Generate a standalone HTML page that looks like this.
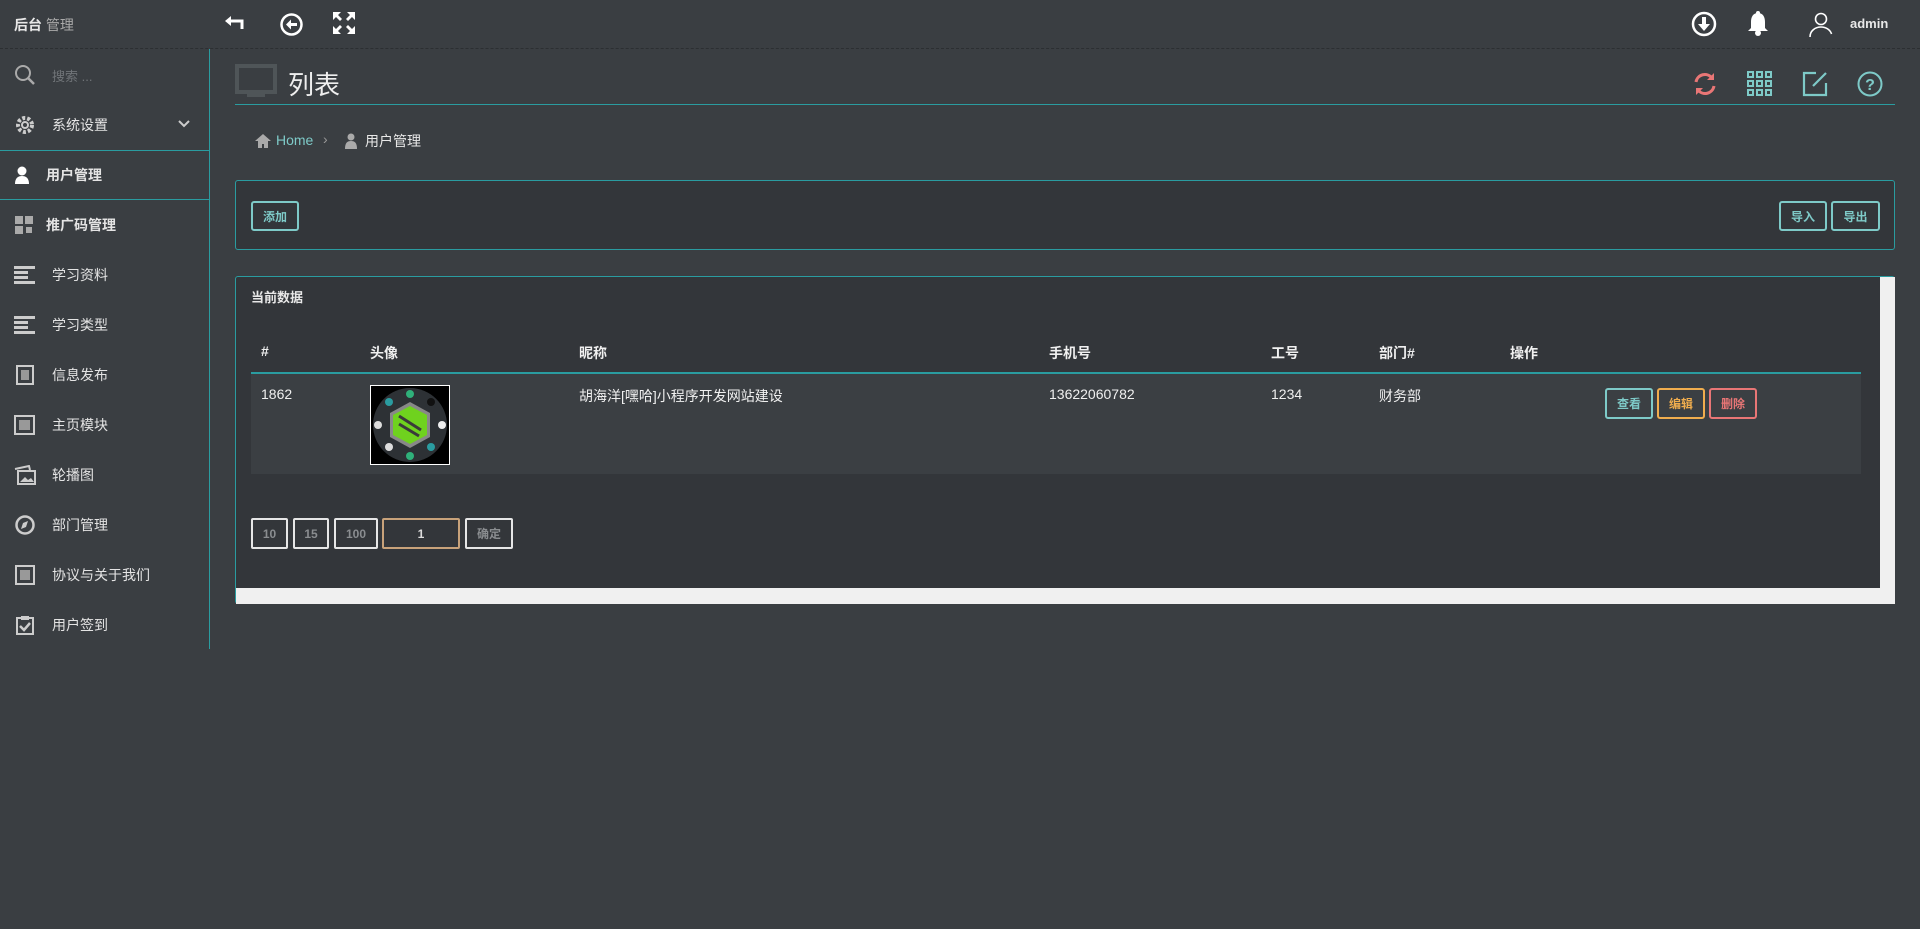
<!DOCTYPE html>
<html><head><meta charset="utf-8"><style>
*{margin:0;padding:0;box-sizing:border-box}
body{width:1920px;height:929px;background:#3a3e42;font-family:"Liberation Sans","Noto Sans CJK SC",sans-serif;color:#e8e8e8;position:relative;overflow:hidden;font-size:14px}
.a{position:absolute}
.top{left:0;top:0;width:1920px;height:49px;background:#3a3e42;border-bottom:1px dashed #2c2f32}
.side{left:0;top:49px;width:210px;height:600px;border-right:1px solid #2a9ca0}
.si{position:absolute;left:0;width:210px;height:50px;display:flex;align-items:center;font-size:14px;color:#e4e4e4}
.si .ic{width:22px;height:20px;margin:0 16px 0 14px;display:inline-block}
.btn{position:absolute;border:2px solid #7ecac8;border-radius:3px;color:#7ecac8;font-size:12px;font-weight:bold;display:flex;align-items:center;justify-content:center}
.th{position:absolute;top:343px;font-weight:bold;font-size:14px;color:#f0f0f0}
.td{position:absolute;top:386px;font-size:14px;color:#f0f0f0}
.pg{position:absolute;top:518px;height:31px;border:2px solid #e6e6e6;border-radius:2px;color:#8a8d90;font-size:12px;display:flex;align-items:center;justify-content:center;font-weight:bold}
</style></head><body>
<div class="a top"></div>
<div class="a" style="left:14px;top:15px;font-size:14px"><b>后台</b> <span style="color:#aaa">管理</span></div>
<svg class="a" style="left:224px;top:13px" width="24" height="22" viewBox="0 0 24 22"><path d="M3 8h15v8" fill="none" stroke="#fff" stroke-width="3"/><path d="M1 8l6-5v10z" fill="#fff"/></svg>
<svg class="a" style="left:279px;top:12px" width="25" height="25"><circle cx="12.5" cy="12.5" r="10" fill="none" stroke="#fff" stroke-width="2.5"/><path d="M7 12.5l5-5v3.5h6v3h-6v3.5z" fill="#fff"/></svg>
<svg class="a" style="left:332px;top:11px" width="24" height="24" viewBox="0 0 24 24" fill="#fff"><path d="M1 1h8l-3 3 4 4-2 2-4-4-3 3zM23 1v8l-3-3-4 4-2-2 4-4-3-3zM1 23v-8l3 3 4-4 2 2-4 4 3 3zM23 23h-8l3-3-4-4 2-2 4 4 3-3z"/></svg>
<svg class="a" style="left:1691px;top:11px" width="26" height="26"><circle cx="13" cy="13" r="11" fill="none" stroke="#fff" stroke-width="2.5"/><path d="M11 6h4v7h4l-6 7-6-7h4z" fill="#fff"/></svg>
<svg class="a" style="left:1746px;top:10px" width="24" height="27" viewBox="0 0 24 27" fill="#fff"><circle cx="12" cy="3" r="2"/><path d="M12 3c-5 0-7 4-7 9v6l-3 3h20l-3-3v-6c0-5-2-9-7-9z"/><circle cx="12" cy="23" r="3"/></svg>
<svg class="a" style="left:1808px;top:11px" width="26" height="27" fill="none" stroke="#fff" stroke-width="1.6"><circle cx="13" cy="8" r="5.5"/><path d="M2 26c0-6 5-10 11-10s11 4 11 10" stroke-dasharray="30 3"/></svg>
<div class="a" style="left:1850px;top:16px;font-size:13px;font-weight:bold">admin</div>

<div class="a side"></div>
<div class="a" style="left:0;top:150px;width:210px;height:1px;background:#2a9ca0"></div>
<div class="a" style="left:0;top:199px;width:210px;height:1px;background:#2a9ca0"></div>
<div class="si" style="top:50px"><svg class="ic" viewBox="0 0 22 20"><circle cx="9" cy="8" r="7" fill="none" stroke="#aaa" stroke-width="2"/><path d="M14 13l6 6" stroke="#aaa" stroke-width="2.5"/></svg><span style="color:#707478;font-size:13px">搜索 ...</span></div>
<div class="si" style="top:100px"><svg class="ic" viewBox="0 0 22 20"><circle cx="11" cy="10" r="7" fill="none" stroke="#ccc" stroke-width="4" stroke-dasharray="3 2"/><circle cx="11" cy="10" r="3" fill="none" stroke="#ccc" stroke-width="2"/></svg>系统设置<svg style="position:absolute;left:178px;top:20px" width="12" height="8"><path d="M1 1l5 5 5-5" fill="none" stroke="#ccc" stroke-width="2"/></svg></div>
<div class="si" style="top:150px;font-weight:bold"><svg class="ic" style="margin-right:10px" viewBox="0 0 22 20"><circle cx="8" cy="6" r="4.5" fill="#fff"/><path d="M1 19c0-6 3-8 7-8s7 2 7 8z" fill="#fff"/></svg>用户管理</div>
<div class="si" style="top:200px;font-weight:bold"><svg class="ic" style="margin-right:10px" viewBox="0 0 22 20" fill="#aaa"><rect x="1" y="1" width="8" height="8"/><rect x="11" y="1" width="8" height="8"/><rect x="1" y="11" width="8" height="8"/><rect x="12" y="12" width="6" height="6"/></svg>推广码管理</div>
<div class="si" style="top:250px"><svg class="ic" viewBox="0 0 22 20" fill="#ccc"><rect x="0" y="1" width="21" height="3"/><rect x="0" y="6" width="14" height="3"/><rect x="0" y="11" width="14" height="3"/><rect x="0" y="16" width="21" height="3"/></svg>学习资料</div>
<div class="si" style="top:300px"><svg class="ic" viewBox="0 0 22 20" fill="#ccc"><rect x="0" y="1" width="21" height="3"/><rect x="0" y="6" width="14" height="3"/><rect x="0" y="11" width="14" height="3"/><rect x="0" y="16" width="21" height="3"/></svg>学习类型</div>
<div class="si" style="top:350px"><svg class="ic" viewBox="0 0 22 20"><rect x="3" y="1" width="16" height="18" fill="none" stroke="#ccc" stroke-width="2"/><rect x="7" y="5" width="8" height="10" fill="#999"/></svg>信息发布</div>
<div class="si" style="top:400px"><svg class="ic" viewBox="0 0 22 20"><rect x="1" y="1" width="19" height="18" fill="none" stroke="#ccc" stroke-width="2"/><rect x="5" y="5" width="11" height="10" fill="#999"/></svg>主页模块</div>
<div class="si" style="top:450px"><svg class="ic" viewBox="0 0 22 20"><rect x="4" y="6" width="17" height="13" fill="none" stroke="#ccc" stroke-width="2"/><path d="M1 4l14-3 1 4" fill="none" stroke="#ccc" stroke-width="2"/><path d="M6 17l5-5 3 3 3-2 3 4z" fill="#ccc"/></svg>轮播图</div>
<div class="si" style="top:500px"><svg class="ic" viewBox="0 0 22 20"><circle cx="11" cy="10" r="8.5" fill="none" stroke="#ccc" stroke-width="2.5"/><path d="M14 6l-2 6-5 2 2-6z" fill="#ccc"/></svg>部门管理</div>
<div class="si" style="top:550px"><svg class="ic" viewBox="0 0 22 20"><rect x="2" y="1" width="18" height="18" fill="none" stroke="#ccc" stroke-width="2"/><rect x="6" y="5" width="10" height="10" fill="#999"/></svg>协议与关于我们</div>
<div class="si" style="top:600px"><svg class="ic" viewBox="0 0 22 20"><rect x="3" y="3" width="16" height="16" fill="none" stroke="#ccc" stroke-width="2"/><rect x="7" y="1" width="8" height="4" fill="#ccc"/><path d="M6 11l4 4 6-7" fill="none" stroke="#ccc" stroke-width="2.5"/></svg>用户签到</div>

<svg class="a" style="left:235px;top:64px" width="42" height="36"><rect x="2" y="2" width="38" height="26" fill="none" stroke="#4f5558" stroke-width="4"/><rect x="12" y="30" width="18" height="3" fill="#4f5558"/></svg>
<div class="a" style="left:288px;top:65px;font-size:26px;color:#eee">列表</div>
<div class="a" style="left:235px;top:104px;width:1660px;height:1px;background:#2a9ca0"></div>
<svg class="a" style="left:1692px;top:71px" width="26" height="26" fill="none" stroke="#e97676" stroke-width="3"><path d="M4 11a9 9 0 0 1 16-4"/><path d="M22 15a9 9 0 0 1-16 4"/><path d="M22 2v7h-7z M4 24v-7h7z" fill="#e97676" stroke="none"/></svg>
<svg class="a" style="left:1747px;top:71px" width="26" height="26" fill="none" stroke="#7ecac8" stroke-width="2"><rect x="1" y="1" width="5" height="5"/><rect x="10" y="1" width="5" height="5"/><rect x="19" y="1" width="5" height="5"/><rect x="1" y="10" width="5" height="5"/><rect x="10" y="10" width="5" height="5"/><rect x="19" y="10" width="5" height="5"/><rect x="1" y="19" width="5" height="5"/><rect x="10" y="19" width="5" height="5"/><rect x="19" y="19" width="5" height="5"/></svg>
<svg class="a" style="left:1802px;top:71px" width="26" height="26" fill="none" stroke="#7ecac8" stroke-width="2.2"><path d="M14 2H2v22h22V12"/><path d="M11 15L24 2"/></svg>
<svg class="a" style="left:1857px;top:71px" width="26" height="26"><circle cx="13" cy="13" r="11.5" fill="none" stroke="#7ecac8" stroke-width="2"/><text x="13" y="19" text-anchor="middle" font-family="Liberation Sans" font-weight="bold" font-size="16" fill="#7ecac8">?</text></svg>

<svg class="a" style="left:254px;top:133px" width="18" height="16"><path d="M9 1l8 7h-3v7h-4v-4H8v4H4V8H1z" fill="#aaa"/></svg>
<div class="a" style="left:276px;top:132px;font-size:14px;color:#7ecac8">Home</div>
<div class="a" style="left:323px;top:131px;color:#999">›</div>
<svg class="a" style="left:344px;top:133px" width="14" height="16" fill="#aaa"><circle cx="7" cy="4" r="3.5"/><path d="M1 16c0-6 2-8 6-8s6 2 6 8z"/></svg>
<div class="a" style="left:365px;top:131px;font-size:14px">用户管理</div>

<div class="a" style="left:235px;top:180px;width:1660px;height:70px;background:#33363a;border:1px solid #2a9ca0;border-radius:3px"></div>
<div class="btn" style="left:251px;top:201px;width:48px;height:30px">添加</div>
<div class="btn" style="left:1779px;top:201px;width:48px;height:30px">导入</div>
<div class="btn" style="left:1831px;top:201px;width:49px;height:30px">导出</div>

<div class="a" style="left:235px;top:276px;width:1660px;height:328px;background:#33363a;border:1px solid #2a9ca0;border-radius:3px"></div>
<div class="a" style="left:1880px;top:277px;width:15px;height:311px;background:#f0f0f0"></div>
<div class="a" style="left:236px;top:588px;width:1659px;height:16px;background:#f0f0f0"></div>
<div class="a" style="left:251px;top:287px;font-size:13px;font-weight:bold">当前数据</div>
<div class="th" style="left:261px">#</div>
<div class="th" style="left:370px">头像</div>
<div class="th" style="left:579px">昵称</div>
<div class="th" style="left:1049px">手机号</div>
<div class="th" style="left:1271px">工号</div>
<div class="th" style="left:1379px">部门#</div>
<div class="th" style="left:1510px">操作</div>
<div class="a" style="left:251px;top:372px;width:1610px;height:2px;background:#2a9ca0"></div>
<div class="a" style="left:251px;top:374px;width:1610px;height:100px;background:#3b3f43"></div>
<div class="td" style="left:261px">1862</div>
<div class="a" style="left:370px;top:385px;width:80px;height:80px;background:#000;border:1px solid #fff"></div>
<svg class="a" style="left:371px;top:386px" width="78" height="78"><circle cx="39" cy="39" r="37" fill="#2d3135"/><polygon points="39,16 59,27 59,51 39,62 19,51 19,27" fill="#888"/><polygon points="39,20 56,29 56,49 39,58 22,49 22,29" fill="#6fd21e"/><path d="M28 30l22 14M28 38l20 12" stroke="#3a3a3a" stroke-width="3"/><circle cx="39" cy="8" r="4" fill="#2fb07a"/><circle cx="18" cy="16" r="4" fill="#2a9ca0"/><circle cx="60" cy="16" r="4" fill="#111"/><circle cx="7" cy="39" r="4" fill="#ddd"/><circle cx="71" cy="39" r="4" fill="#eee"/><circle cx="18" cy="61" r="4" fill="#ddd"/><circle cx="60" cy="61" r="4" fill="#2a9ca0"/><circle cx="39" cy="70" r="4" fill="#2fb07a"/></svg>
<div class="td" style="left:579px">胡海洋[嘿哈]小程序开发网站建设</div>
<div class="td" style="left:1049px">13622060782</div>
<div class="td" style="left:1271px">1234</div>
<div class="td" style="left:1379px">财务部</div>
<div class="btn" style="left:1605px;top:388px;width:48px;height:31px">查看</div>
<div class="btn" style="left:1657px;top:388px;width:48px;height:31px;border-color:#f0ad4e;color:#f0ad4e">编辑</div>
<div class="btn" style="left:1709px;top:388px;width:48px;height:31px;border-color:#e97676;color:#e97676">删除</div>

<div class="pg" style="left:251px;width:37px">10</div>
<div class="pg" style="left:293px;width:36px">15</div>
<div class="pg" style="left:334px;width:44px">100</div>
<div class="pg" style="left:382px;width:78px;border-color:#c8a27a;color:#ddd">1</div>
<div class="pg" style="left:465px;width:48px">确定</div>
</body></html>
